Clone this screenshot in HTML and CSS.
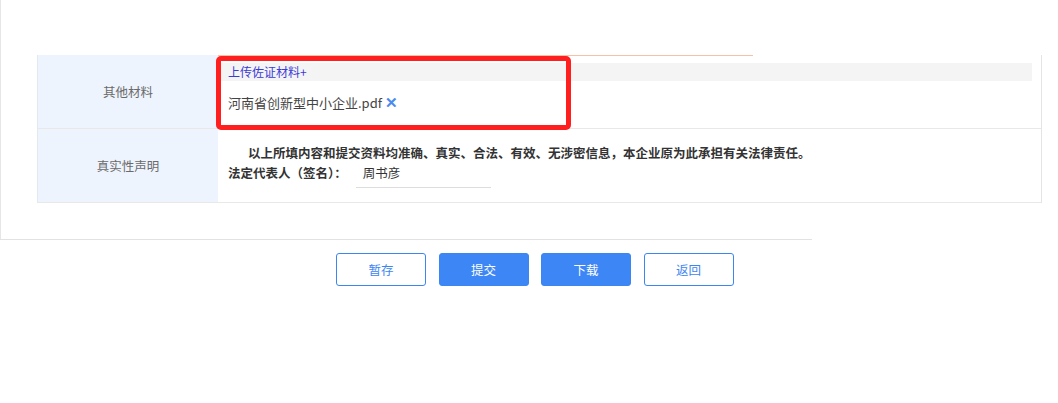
FILE: index.html
```html
<!DOCTYPE html>
<html lang="zh-CN">
<head>
  <meta charset="UTF-8">
  <title>佐证材料</title>
  <link rel="stylesheet" href="styles.css">
</head>
<body>
  <div class="panel">
    <div class="table">
      <div class="row">
        <div class="label">其他材料</div>
        <div class="cell">
          <div class="topline"></div>
          <div class="upload"><a class="uploadLink">上传佐证材料+</a></div>
          <div class="file">河南省创新型中小企业.pdf <span class="del">✕</span></div>
          <div class="mark"></div>
        </div>
      </div>
      <div class="row">
        <div class="label">真实性声明</div>
        <div class="cell state">
          <p class="stateText">以上所填内容和提交资料均准确、真实、合法、有效、无涉密信息，本企业原为此承担有关法律责任。</p>
          <div class="sign">
            <span class="signLabel">法定代表人（签名）：</span>
            <span class="signInput">周书彦</span>
          </div>
        </div>
      </div>
    </div>
  </div>
  <div class="panelLine"></div>

  <div class="btns">
    <button class="btn">暂存</button>
    <button class="btn primary">提交</button>
    <button class="btn primary">下载</button>
    <button class="btn">返回</button>
  </div>
</body>
</html>
```

FILE: styles.css
```css
* {
  padding: 0;
  margin: 0;
  box-sizing: border-box;
}

body {
  background-color: #fff;
  font-family: "Noto Sans CJK SC", "Microsoft YaHei", sans-serif;
  font-size: 12px;
  color: #333;
}

.panel {
  border-left: 1px solid #e6e6e6;
  padding: 55px 0 36px 36px;
}

.panelLine {
  width: 812px;
  height: 1px;
  background-color: #e2e2e2;
}

.table {
  width: 1005px;
  border-right: 1px solid #e4e4e4;
}

.row {
  display: flex;
  height: 74px;
  border-bottom: 1px solid #e8e8e8;
}

.label {
  width: 181px;
  flex-shrink: 0;
  background-color: #eef4fd;
  border-left: 1px solid #e4e9f0;
  color: #6a6a6a;
  font-size: 12.5px;
  display: flex;
  align-items: center;
  justify-content: center;
}

.cell {
  flex: 1;
  position: relative;
  padding-right: 9px;
}

.topline {
  width: 535px;
  height: 1px;
  background-color: #f4c2a6;
}

.upload {
  margin-top: 7px;
  height: 18px;
  line-height: 18px;
  background-color: #f4f4f5;
  padding-left: 10px;
}

.uploadLink {
  color: #3b3bd8;
  font-size: 12px;
  cursor: pointer;
}

.file {
  margin-top: 11px;
  padding-left: 10px;
  font-size: 13px;
  color: #444;
  line-height: 20px;
}

.del {
  color: #4a8af0;
  font-weight: bold;
  font-size: 15px;
}

/* 红色标注框 */
.mark {
  position: absolute;
  left: -2px;
  top: 1px;
  width: 355px;
  height: 74px;
  border: 5px solid #ff1f1f;
  border-radius: 5px;
}

.state {
  padding: 15px 0 0 10px;
  height: 73px;
}

.stateText {
  text-indent: 20px;
  font-size: 12.5px;
  font-weight: bold;
  color: #333;
  line-height: 18px;
}

.sign {
  display: flex;
  align-items: flex-start;
  margin-top: 2px;
}

.signLabel {
  font-size: 12.5px;
  font-weight: bold;
  line-height: 18px;
}

.signInput {
  margin-left: 9px;
  width: 135px;
  height: 24px;
  padding-left: 7px;
  border-bottom: 1px solid #ddd;
  font-size: 12.5px;
  line-height: 18px;
}

.btns {
  display: flex;
  gap: 12.5px;
  margin: 13px 0 0 336px;
}

.btn {
  width: 90px;
  height: 33px;
  border: 1px solid #3c86f2;
  border-radius: 3px;
  background-color: #fff;
  color: #3c86f2;
  font-family: "Noto Sans CJK SC", sans-serif;
  font-size: 12.5px;
  cursor: pointer;
}

.btn.primary {
  background-color: #3c86f5;
  color: #fff;
}
```
